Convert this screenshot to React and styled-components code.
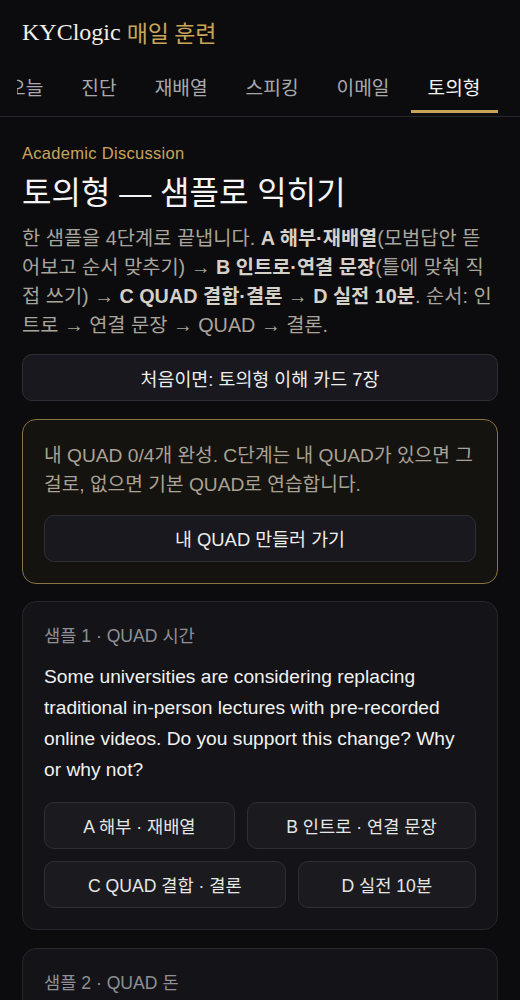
import React, { useLayoutEffect, useRef } from 'react'
import styled, { createGlobalStyle } from 'styled-components'

const GlobalStyle = createGlobalStyle`
  * { box-sizing: border-box; }
  body {
    margin: 0;
    background: #0c0c0e;
    font-family: "Liberation Sans", "Noto Sans CJK KR", sans-serif;
    color: #ececec;
  }
`

const tabs = ['오늘', '진단', '재배열', '스피킹', '이메일', '토의형']

const samples = [
  {
    label: '샘플 1 · QUAD 시간',
    question:
      'Some universities are considering replacing traditional in-person lectures with pre-recorded online videos. Do you support this change? Why or why not?',
  },
  {
    label: '샘플 2 · QUAD 돈',
    question:
      'Some people think governments should spend more money on public transportation than on building new roads. Do you agree or disagree?',
  },
]

const steps = ['A 해부 · 재배열', 'B 인트로 · 연결 문장', 'C QUAD 결합 · 결론', 'D 실전 10분']

export default function App() {
  const navRef = useRef(null)

  useLayoutEffect(() => {
    // keep the active tab in view
    if (navRef.current) navRef.current.scrollLeft = navRef.current.scrollWidth
  }, [])

  return (
    <Page>
      <GlobalStyle />
      <Header>
        <Brand>
          KYClogic&nbsp;<Gold>매일 훈련</Gold>
        </Brand>
        <Nav ref={navRef}>
          {tabs.map((t) => (
            <Tab key={t} $active={t === '토의형'}>{t}</Tab>
          ))}
        </Nav>
      </Header>

      <Main>
        <Eyebrow>Academic Discussion</Eyebrow>
        <Title>토의형 — 샘플로 익히기</Title>
        <Intro>
          한 샘플을 4단계로 끝냅니다. <strong>A 해부·재배열</strong>(모범답안 뜯어보고 순서 맞추기) → <strong>B 인트로·연결 문장</strong>(틀에 맞춰 직접 쓰기) → <strong>C QUAD 결합·결론</strong> → <strong>D 실전 10분</strong>. 순서: 인트로 → 연결 문장 → QUAD → 결론.
        </Intro>

        <Button>처음이면: 토의형 이해 카드 7장</Button>

        <Card $gold>
          <Notice>내 QUAD 0/4개 완성. C단계는 내 QUAD가 있으면 그걸로, 없으면 기본 QUAD로 연습합니다.</Notice>
          <Button>내 QUAD 만들러 가기</Button>
        </Card>

        {samples.map((s) => (
          <Card key={s.label}>
            <SampleLabel>{s.label}</SampleLabel>
            <Question>{s.question}</Question>
            <StepGrid>
              {steps.map((st) => (
                <StepButton key={st}>{st}</StepButton>
              ))}
            </StepGrid>
          </Card>
        ))}
      </Main>
    </Page>
  )
}

const Page = styled.div`
  min-height: 100vh;
  background: #0c0c0e;
`

const Header = styled.header`
  padding: 14px 22px 3px;
  border-bottom: 1px solid #26262b;
`

const Brand = styled.div`
  display: flex;
  align-items: center;
  height: 36px;
  font-family: "Liberation Serif", "Noto Sans CJK KR", serif;
  font-size: 24px;
  color: #f1eee8;
`

const Gold = styled.span`
  font-family: "Noto Sans CJK KR", sans-serif;
  font-size: 23px;
  color: #c9a55a;
`

const Nav = styled.nav`
  display: flex;
  gap: 4px;
  margin: 14px 0 0 -5px;
  overflow-x: auto;
  scrollbar-width: none;
  &::-webkit-scrollbar { display: none; }
`

const Tab = styled.div`
  flex: 0 0 auto;
  height: 49px;
  padding: 0 17px;
  display: flex;
  align-items: center;
  font-family: "Noto Sans CJK KR", sans-serif;
  font-size: 19.2px;
  color: ${(p) => (p.$active ? '#f3f3f3' : '#a9a9ad')};
  border-bottom: 3px solid ${(p) => (p.$active ? '#c9a55a' : 'transparent')};
`

const Main = styled.main`
  display: flex;
  flex-direction: column;
  gap: 17.5px;
  padding: 25px 22px 40px;
`

const Eyebrow = styled.div`
  font-size: 16.5px;
  line-height: 22px;
  color: #c9a55a;
  letter-spacing: 0.3px;
  margin-bottom: -8.5px;
`

const Title = styled.h1`
  margin: 0 0 -7px;
  font-size: 32px;
  font-weight: 400;
  line-height: 40px;
  color: #f4f4f4;
`

const Intro = styled.p`
  margin: 0 0 -3px;
  font-size: 19.8px;
  line-height: 29px;
  color: #aaa59c;

  strong {
    color: #d6d1c8;
  }
`

const Button = styled.button`
  width: 100%;
  height: 47px;
  border: 1px solid #2e2e36;
  border-radius: 10px;
  background: #18181e;
  color: #ededed;
  font-family: inherit;
  font-size: 18.4px;
  cursor: pointer;
`

const Card = styled.section`
  display: flex;
  flex-direction: column;
  padding: 21px;
  border-radius: 14px;
  border: 1px solid ${(p) => (p.$gold ? '#8a7444' : '#26262c')};
  background: ${(p) => (p.$gold ? '#15130f' : '#141418')};
`

const Notice = styled.p`
  margin: 0 0 16px;
  font-size: 19.2px;
  line-height: 29px;
  color: #aaa295;
`

const SampleLabel = styled.div`
  font-size: 17.6px;
  line-height: 26px;
  color: #8f8f95;
`

const Question = styled.p`
  margin: 11.5px 0 17.5px;
  font-size: 19.2px;
  line-height: 31px;
  color: #f1f1f1;
`

const StepGrid = styled.div`
  display: flex;
  flex-wrap: wrap;
  gap: 12px;
`

const StepButton = styled.button`
  flex: 1 1 auto;
  height: 47px;
  padding: 0 18px;
  border: 1px solid #2e2e36;
  border-radius: 10px;
  background: #1a1a1f;
  color: #e6e6e6;
  font-family: inherit;
  font-size: 17.6px;
  cursor: pointer;
`
